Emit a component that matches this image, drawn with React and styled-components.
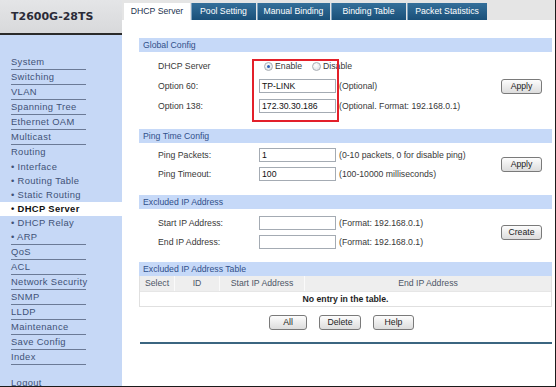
import React from 'react';
import styled, { createGlobalStyle } from 'styled-components';

const GlobalStyle = createGlobalStyle`
  html, body { margin: 0; padding: 0; background: #fff; }
  body { font-family: "Liberation Sans", Arial, sans-serif; }
  * { box-sizing: border-box; }
`;

// Menu structure: top level items with an underline, Routing opens a group
const menuTop = ['System', 'Switching', 'VLAN', 'Spanning Tree', 'Ethernet OAM', 'Multicast'];
const routingSub = ['Interface', 'Routing Table', 'Static Routing', 'DHCP Server', 'DHCP Relay', 'ARP'];
const menuBottom = ['QoS', 'ACL', 'Network Security', 'SNMP', 'LLDP', 'Maintenance', 'Save Config', 'Index'];

const tabs = [
    { label: 'DHCP Server', w: 66, active: true },
    { label: 'Pool Setting', w: 65 },
    { label: 'Manual Binding', w: 73 },
    { label: 'Binding Table', w: 75 },
    { label: 'Packet Statistics', w: 80 }
];

const Frame = styled.div`
    display: flex;
    width: 556px;
    height: 387px;
    border-right: 1px solid #1b1b1b;
    border-bottom: 1px solid #1b1b1b;
    overflow: hidden;
    background: #fff;
`;

const Sidebar = styled.div`
    width: 122px;
    flex: none;
    background: #c6d8f6;
    display: flex;
    flex-direction: column;
`;

const Brand = styled.div`
    height: 35px;
    background: linear-gradient(#e4e5e7, #d8d9db);
    border-bottom: 2px solid #2a2a2a;
    padding-left: 11px;
    font: bold 11px "DejaVu Sans", Verdana, sans-serif;
    line-height: 33px;
    color: #2b2b38;
`;

const Menu = styled.nav`
    padding-top: 20px;
    font-size: 9.4px;
    letter-spacing: 0.35px;
    color: #415276;
`;

const MenuItem = styled.div`
    margin-left: 11px;
    width: 75px;
    height: 15px;
    line-height: 14px;
    white-space: nowrap;
    border-bottom: 1px solid ${({ $plain }) => ($plain ? 'transparent' : '#6b7a96')};
`;

const SubItem = styled.div`
    height: 14px;
    line-height: 14px;
    padding-left: 11px;
    white-space: nowrap;
    background: ${({ $active }) => ($active ? '#fff' : 'transparent')};
    color: ${({ $active }) => ($active ? '#111' : 'inherit')};
    font-weight: ${({ $active }) => ($active ? 'bold' : 'normal')};
`;

const MenuRule = styled.div`
    margin-left: 11px;
    width: 75px;
    height: 1px;
    background: #6b7a96;
`;

const Logout = styled.div`
    margin: 11px 0 0 11px;
    line-height: 14px;
`;

const Main = styled.div`
    flex: 1;
    min-width: 0;
    display: flex;
    flex-direction: column;
    font-size: 8.7px;
    color: #383838;
`;

const TabBar = styled.div`
    height: 20px;
    flex: none;
    background: #e5e5e5;
    display: flex;
    align-items: flex-end;
    gap: 1px;
    padding-left: 2px;
`;

const Tab = styled.div`
    width: ${({ $w }) => $w}px;
    height: 17px;
    line-height: 17px;
    text-align: center;
    white-space: nowrap;
    background: ${({ $active }) => ($active ? '#fff' : 'linear-gradient(#346f9a, #1a5079)')};
    color: ${({ $active }) => ($active ? '#1d3450' : '#fff')};
    box-shadow: ${({ $active }) => ($active ? 'none' : 'inset 1px 0 0 #7fa3c0')};
`;

const Panel = styled.div`
    margin: 18px 3px 0 17px;
    display: flex;
    flex-direction: column;
`;

const Section = styled.section`
    position: relative;
`;

const SectionTitle = styled.div`
    height: 14px;
    line-height: 14px;
    padding-left: 4px;
    background: #c6d9f8;
    color: #31508a;
`;

const SectionBody = styled.div`
    display: flex;
    align-items: center;
    padding: ${({ $pt }) => $pt}px 10px ${({ $pb }) => $pb}px 19px;
`;

const Fields = styled.div`
    flex: 1;
    display: grid;
    grid-template-columns: 98px 77px auto;
    grid-auto-rows: ${({ $rowH }) => $rowH}px;
    column-gap: 3px;
    align-items: center;
`;

const Label = styled.span`
    white-space: nowrap;
`;

const Hint = styled.span`
    white-space: nowrap;
`;

const TextBox = styled.div`
    height: 14px;
    line-height: 12px;
    padding-left: 2px;
    border: 1px solid #a4abb3;
    background: #fff;
    color: #111;
`;

const RadioGroup = styled.div`
    grid-column: 2 / 4;
    display: flex;
    align-items: center;
    padding-left: 5px;
`;

const Radio = styled.span`
    position: relative;
    width: 9px;
    height: 9px;
    border-radius: 50%;
    border: 1px solid #a9aeb4;
    background: radial-gradient(circle at 40% 35%, #fff, #d6dbe2);
    margin-right: 2px;
    &::after {
        content: '';
        display: ${({ $checked }) => ($checked ? 'block' : 'none')};
        position: absolute;
        left: 2px;
        top: 2px;
        width: 3px;
        height: 3px;
        border-radius: 50%;
        background: #2a5fb5;
    }
`;

const RadioText = styled.span`
    margin-right: 10px;
`;

const Button = styled.div`
    width: ${({ $w }) => $w || 41}px;
    height: 15px;
    line-height: 13px;
    text-align: center;
    flex: none;
    border: 1px solid #7a7a7a;
    border-radius: 3px;
    background: linear-gradient(#fdfdfd, #dcdcdc);
    color: #222;
`;

const Annotation = styled.div`
    position: absolute;
    left: 113px;
    top: 21px;
    width: 87px;
    height: 63px;
    border: 2px solid #e3202a;
    pointer-events: none;
`;

const Table = styled.div`
    border: 1px solid #e0e0e0;
    border-top: none;
`;

const TableRow = styled.div`
    display: grid;
    grid-template-columns: 34px 45px 85px 1fr;
    height: 15px;
    line-height: 15px;
    background: #eeeeee;
    color: #4d5666;
    & > span {
        text-align: center;
        border-left: 1px solid #fafafa;
    }
    & > span:first-child { border-left: none; }
`;

const EmptyRow = styled.div`
    height: 15px;
    line-height: 15px;
    text-align: center;
    font-weight: bold;
    color: #1e1e1e;
    border-top: 1px solid #e6e6e6;
`;

const ButtonRow = styled.div`
    display: flex;
    justify-content: center;
    gap: 12px;
    margin-top: 8px;
    padding-right: 8px;
`;

const BottomRule = styled.div`
    height: 2px;
    margin-top: 12px;
    margin-left: 1px;
    background: #3b6580;
`;

function ConfigSection({ title, pt, pb, rowH, button, children, overlay }) {
    return (
        <Section>
            <SectionTitle>{title}</SectionTitle>
            <SectionBody $pt={pt} $pb={pb}>
                <Fields $rowH={rowH}>{children}</Fields>
                <Button>{button}</Button>
            </SectionBody>
            {overlay}
        </Section>
    );
}

function Field({ label, value = '', hint }) {
    return (
        <>
            <Label>{label}</Label>
            <TextBox>{value}</TextBox>
            <Hint>{hint}</Hint>
        </>
    );
}

export default function App() {
    return (
        <>
            <GlobalStyle />
            <Frame>
                <Sidebar>
                    <Brand>T2600G-28TS</Brand>
                    <Menu>
                        {menuTop.map((m) => (
                            <MenuItem key={m}>{m}</MenuItem>
                        ))}
                        <MenuItem $plain>Routing</MenuItem>
                        {routingSub.map((s) => (
                            <SubItem key={s} $active={s === 'DHCP Server'}>• {s}</SubItem>
                        ))}
                        <MenuRule />
                        {menuBottom.map((m) => (
                            <MenuItem key={m}>{m}</MenuItem>
                        ))}
                        <Logout>Logout</Logout>
                    </Menu>
                </Sidebar>
                <Main>
                    <TabBar>
                        {tabs.map((t) => (
                            <Tab key={t.label} $w={t.w} $active={t.active}>{t.label}</Tab>
                        ))}
                    </TabBar>
                    <Panel>
                        <ConfigSection
                            title="Global Config"
                            pt={4}
                            pb={13}
                            rowH={20}
                            button="Apply"
                            overlay={<Annotation />}
                        >
                            <Label>DHCP Server</Label>
                            <RadioGroup>
                                <Radio $checked />
                                <RadioText>Enable</RadioText>
                                <Radio />
                                <RadioText>Disable</RadioText>
                            </RadioGroup>
                            <Field label="Option 60:" value="TP-LINK" hint="(Optional)" />
                            <Field label="Option 138:" value="172.30.30.186" hint="(Optional. Format: 192.168.0.1)" />
                        </ConfigSection>
                        <ConfigSection title="Ping Time Config" pt={2} pb={12} rowH={19} button="Apply">
                            <Field label="Ping Packets:" value="1" hint="(0-10 packets, 0 for disable ping)" />
                            <Field label="Ping Timeout:" value="100" hint="(100-10000 milliseconds)" />
                        </ConfigSection>
                        <ConfigSection title="Excluded IP Address" pt={4} pb={11} rowH={19} button="Create">
                            <Field label="Start IP Address:" hint="(Format: 192.168.0.1)" />
                            <Field label="End IP Address:" hint="(Format: 192.168.0.1)" />
                        </ConfigSection>
                        <Section>
                            <SectionTitle>Excluded IP Address Table</SectionTitle>
                            <Table>
                                <TableRow>
                                    <span>Select</span>
                                    <span>ID</span>
                                    <span>Start IP Address</span>
                                    <span>End IP Address</span>
                                </TableRow>
                                <EmptyRow>No entry in the table.</EmptyRow>
                            </Table>
                            <ButtonRow>
                                <Button $w={38}>All</Button>
                                <Button $w={42}>Delete</Button>
                                <Button $w={41}>Help</Button>
                            </ButtonRow>
                            <BottomRule />
                        </Section>
                    </Panel>
                </Main>
            </Frame>
        </>
    );
}
